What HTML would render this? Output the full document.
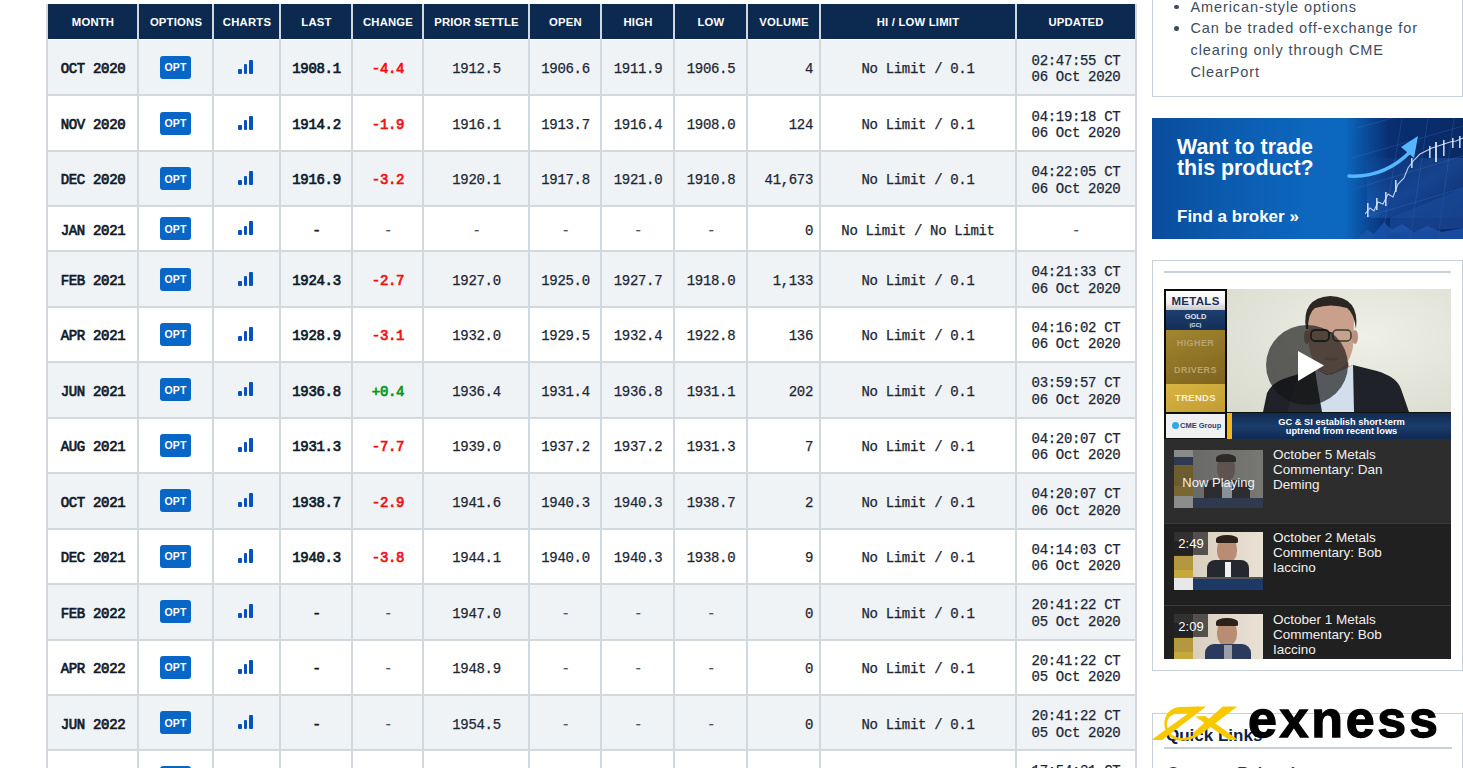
<!DOCTYPE html>
<html><head><meta charset="utf-8"><title>Gold Futures Quotes</title>
<style>
*{box-sizing:border-box;margin:0;padding:0}
html,body{width:1463px;height:768px;overflow:hidden;background:#fff}
body{position:relative;font-family:"Liberation Sans",sans-serif}
.ab{position:absolute}
.hd{position:absolute;top:4px;height:35px;background:#0c2a4f}
.ht{position:absolute;top:4px;height:35px;display:flex;align-items:center;justify-content:center;color:#fff;font:bold 11.3px "Liberation Sans",sans-serif;letter-spacing:0.2px;white-space:nowrap}
.rw{position:absolute;left:47px;width:1090px}
.c{position:absolute;display:flex;align-items:center;justify-content:center;padding-top:4px;font-family:"Liberation Mono",monospace;font-size:14px;line-height:16.5px;color:#1c2633;white-space:pre;text-align:center;letter-spacing:-0.33px;-webkit-text-stroke:0.25px #1c2633}
.b{color:#101a28;-webkit-text-stroke:0.7px #101a28}
.r{justify-content:flex-end;padding-right:7px}
.vl{position:absolute;width:2px;background:#d1d8de}
.hl{position:absolute;height:2px;background:#d1d8de}
.opt{position:absolute;width:31px;height:23px;background:#0866c6;border-radius:3px;color:#fff;font:bold 10.5px "Liberation Sans",sans-serif;display:flex;align-items:center;justify-content:center;letter-spacing:0.2px}
.bar{position:absolute;width:3.5px;background:#0752bd;border-radius:1px}
.neg{color:#f50d0d;-webkit-text-stroke:0.7px #f50d0d}
.sb{position:absolute;left:1190.5px;font:14.5px "Liberation Sans",sans-serif;line-height:21.7px;letter-spacing:0.9px;color:#3e4c5d;white-space:nowrap}
.bl{width:4.5px;height:4.5px;border-radius:50%;background:#3e4c5d}
.bt{color:#fff;font-family:"Liberation Sans",sans-serif;font-weight:bold;white-space:nowrap}
.th{width:89px;height:58px;overflow:hidden;background:#555}
.pt{color:#f0f0f0;font:13.5px "Liberation Sans",sans-serif;line-height:15px;white-space:nowrap}
.pos{color:#05991c;-webkit-text-stroke:0.7px #05991c}
.dash{color:#4a5562;-webkit-text-stroke:0.2px #4a5562}
</style></head><body>

<div class="hd" style="left:48px;width:90px"></div>
<div class="ht" style="left:48px;width:90px">MONTH</div>
<div class="hd" style="left:139px;width:74px"></div>
<div class="ht" style="left:139px;width:74px">OPTIONS</div>
<div class="hd" style="left:214px;width:66px"></div>
<div class="ht" style="left:214px;width:66px">CHARTS</div>
<div class="hd" style="left:281px;width:71px"></div>
<div class="ht" style="left:281px;width:71px">LAST</div>
<div class="hd" style="left:353px;width:70px"></div>
<div class="ht" style="left:353px;width:70px">CHANGE</div>
<div class="hd" style="left:424px;width:105px"></div>
<div class="ht" style="left:424px;width:105px">PRIOR SETTLE</div>
<div class="hd" style="left:530px;width:71px"></div>
<div class="ht" style="left:530px;width:71px">OPEN</div>
<div class="hd" style="left:602px;width:72px"></div>
<div class="ht" style="left:602px;width:72px">HIGH</div>
<div class="hd" style="left:675px;width:72px"></div>
<div class="ht" style="left:675px;width:72px">LOW</div>
<div class="hd" style="left:748px;width:72px"></div>
<div class="ht" style="left:748px;width:72px">VOLUME</div>
<div class="hd" style="left:821px;width:194px"></div>
<div class="ht" style="left:821px;width:194px">HI / LOW LIMIT</div>
<div class="hd" style="left:1016px;width:120px"></div>
<div class="ht" style="left:1016px;width:120px">UPDATED</div>
<div class="rw" style="top:39.5px;height:55.8px;background:#eff3f6"></div>
<div class="c b" style="left:48px;width:90px;top:39.5px;height:55.8px">OCT 2020</div>
<div class="opt" style="left:160px;top:55.9px">OPT</div>
<div class="bar" style="left:238px;top:68.9px;height:5px"></div>
<div class="bar" style="left:243.5px;top:64.4px;height:9.5px"></div>
<div class="bar" style="left:249px;top:59.9px;height:14px"></div>
<div class="c b" style="left:281px;width:71px;top:39.5px;height:55.8px">1908.1</div>
<div class="c b neg" style="left:353px;width:70px;top:39.5px;height:55.8px">-4.4</div>
<div class="c " style="left:424px;width:105px;top:39.5px;height:55.8px">1912.5</div>
<div class="c " style="left:530px;width:71px;top:39.5px;height:55.8px">1906.6</div>
<div class="c " style="left:602px;width:72px;top:39.5px;height:55.8px">1911.9</div>
<div class="c " style="left:675px;width:72px;top:39.5px;height:55.8px">1906.5</div>
<div class="c r" style="left:748px;width:72px;top:39.5px;height:55.8px">4</div>
<div class="c " style="left:821px;width:194px;top:39.5px;height:55.8px">No Limit / 0.1</div>
<div class="c " style="left:1016px;width:120px;top:39.5px;height:55.8px">02:47:55 CT<br>06 Oct 2020</div>
<div class="rw" style="top:95.3px;height:55.500000000000014px;background:#ffffff"></div>
<div class="c b" style="left:48px;width:90px;top:95.3px;height:55.500000000000014px">NOV 2020</div>
<div class="opt" style="left:160px;top:111.6px">OPT</div>
<div class="bar" style="left:238px;top:124.6px;height:5px"></div>
<div class="bar" style="left:243.5px;top:120.1px;height:9.5px"></div>
<div class="bar" style="left:249px;top:115.6px;height:14px"></div>
<div class="c b" style="left:281px;width:71px;top:95.3px;height:55.500000000000014px">1914.2</div>
<div class="c b neg" style="left:353px;width:70px;top:95.3px;height:55.500000000000014px">-1.9</div>
<div class="c " style="left:424px;width:105px;top:95.3px;height:55.500000000000014px">1916.1</div>
<div class="c " style="left:530px;width:71px;top:95.3px;height:55.500000000000014px">1913.7</div>
<div class="c " style="left:602px;width:72px;top:95.3px;height:55.500000000000014px">1916.4</div>
<div class="c " style="left:675px;width:72px;top:95.3px;height:55.500000000000014px">1908.0</div>
<div class="c r" style="left:748px;width:72px;top:95.3px;height:55.500000000000014px">124</div>
<div class="c " style="left:821px;width:194px;top:95.3px;height:55.500000000000014px">No Limit / 0.1</div>
<div class="c " style="left:1016px;width:120px;top:95.3px;height:55.500000000000014px">04:19:18 CT<br>06 Oct 2020</div>
<div class="rw" style="top:150.8px;height:55.5px;background:#eff3f6"></div>
<div class="c b" style="left:48px;width:90px;top:150.8px;height:55.5px">DEC 2020</div>
<div class="opt" style="left:160px;top:167.1px">OPT</div>
<div class="bar" style="left:238px;top:180.1px;height:5px"></div>
<div class="bar" style="left:243.5px;top:175.6px;height:9.5px"></div>
<div class="bar" style="left:249px;top:171.1px;height:14px"></div>
<div class="c b" style="left:281px;width:71px;top:150.8px;height:55.5px">1916.9</div>
<div class="c b neg" style="left:353px;width:70px;top:150.8px;height:55.5px">-3.2</div>
<div class="c " style="left:424px;width:105px;top:150.8px;height:55.5px">1920.1</div>
<div class="c " style="left:530px;width:71px;top:150.8px;height:55.5px">1917.8</div>
<div class="c " style="left:602px;width:72px;top:150.8px;height:55.5px">1921.0</div>
<div class="c " style="left:675px;width:72px;top:150.8px;height:55.5px">1910.8</div>
<div class="c r" style="left:748px;width:72px;top:150.8px;height:55.5px">41,673</div>
<div class="c " style="left:821px;width:194px;top:150.8px;height:55.5px">No Limit / 0.1</div>
<div class="c " style="left:1016px;width:120px;top:150.8px;height:55.5px">04:22:05 CT<br>06 Oct 2020</div>
<div class="rw" style="top:206.3px;height:45.0px;background:#ffffff"></div>
<div class="c b" style="left:48px;width:90px;top:206.3px;height:45.0px">JAN 2021</div>
<div class="opt" style="left:160px;top:217.3px">OPT</div>
<div class="bar" style="left:238px;top:230.3px;height:5px"></div>
<div class="bar" style="left:243.5px;top:225.8px;height:9.5px"></div>
<div class="bar" style="left:249px;top:221.3px;height:14px"></div>
<div class="c b" style="left:281px;width:71px;top:206.3px;height:45.0px">-</div>
<div class="c dash" style="left:353px;width:70px;top:206.3px;height:45.0px">-</div>
<div class="c dash" style="left:424px;width:105px;top:206.3px;height:45.0px">-</div>
<div class="c dash" style="left:530px;width:71px;top:206.3px;height:45.0px">-</div>
<div class="c dash" style="left:602px;width:72px;top:206.3px;height:45.0px">-</div>
<div class="c dash" style="left:675px;width:72px;top:206.3px;height:45.0px">-</div>
<div class="c r" style="left:748px;width:72px;top:206.3px;height:45.0px">0</div>
<div class="c " style="left:821px;width:194px;top:206.3px;height:45.0px">No Limit / No Limit</div>
<div class="c dash" style="left:1016px;width:120px;top:206.3px;height:45.0px">-</div>
<div class="rw" style="top:251.3px;height:55.30000000000001px;background:#eff3f6"></div>
<div class="c b" style="left:48px;width:90px;top:251.3px;height:55.30000000000001px">FEB 2021</div>
<div class="opt" style="left:160px;top:267.5px">OPT</div>
<div class="bar" style="left:238px;top:280.5px;height:5px"></div>
<div class="bar" style="left:243.5px;top:276.0px;height:9.5px"></div>
<div class="bar" style="left:249px;top:271.5px;height:14px"></div>
<div class="c b" style="left:281px;width:71px;top:251.3px;height:55.30000000000001px">1924.3</div>
<div class="c b neg" style="left:353px;width:70px;top:251.3px;height:55.30000000000001px">-2.7</div>
<div class="c " style="left:424px;width:105px;top:251.3px;height:55.30000000000001px">1927.0</div>
<div class="c " style="left:530px;width:71px;top:251.3px;height:55.30000000000001px">1925.0</div>
<div class="c " style="left:602px;width:72px;top:251.3px;height:55.30000000000001px">1927.7</div>
<div class="c " style="left:675px;width:72px;top:251.3px;height:55.30000000000001px">1918.0</div>
<div class="c r" style="left:748px;width:72px;top:251.3px;height:55.30000000000001px">1,133</div>
<div class="c " style="left:821px;width:194px;top:251.3px;height:55.30000000000001px">No Limit / 0.1</div>
<div class="c " style="left:1016px;width:120px;top:251.3px;height:55.30000000000001px">04:21:33 CT<br>06 Oct 2020</div>
<div class="rw" style="top:306.6px;height:55.599999999999966px;background:#ffffff"></div>
<div class="c b" style="left:48px;width:90px;top:306.6px;height:55.599999999999966px">APR 2021</div>
<div class="opt" style="left:160px;top:322.9px">OPT</div>
<div class="bar" style="left:238px;top:335.9px;height:5px"></div>
<div class="bar" style="left:243.5px;top:331.4px;height:9.5px"></div>
<div class="bar" style="left:249px;top:326.9px;height:14px"></div>
<div class="c b" style="left:281px;width:71px;top:306.6px;height:55.599999999999966px">1928.9</div>
<div class="c b neg" style="left:353px;width:70px;top:306.6px;height:55.599999999999966px">-3.1</div>
<div class="c " style="left:424px;width:105px;top:306.6px;height:55.599999999999966px">1932.0</div>
<div class="c " style="left:530px;width:71px;top:306.6px;height:55.599999999999966px">1929.5</div>
<div class="c " style="left:602px;width:72px;top:306.6px;height:55.599999999999966px">1932.4</div>
<div class="c " style="left:675px;width:72px;top:306.6px;height:55.599999999999966px">1922.8</div>
<div class="c r" style="left:748px;width:72px;top:306.6px;height:55.599999999999966px">136</div>
<div class="c " style="left:821px;width:194px;top:306.6px;height:55.599999999999966px">No Limit / 0.1</div>
<div class="c " style="left:1016px;width:120px;top:306.6px;height:55.599999999999966px">04:16:02 CT<br>06 Oct 2020</div>
<div class="rw" style="top:362.2px;height:55.5px;background:#eff3f6"></div>
<div class="c b" style="left:48px;width:90px;top:362.2px;height:55.5px">JUN 2021</div>
<div class="opt" style="left:160px;top:378.4px">OPT</div>
<div class="bar" style="left:238px;top:391.4px;height:5px"></div>
<div class="bar" style="left:243.5px;top:386.9px;height:9.5px"></div>
<div class="bar" style="left:249px;top:382.4px;height:14px"></div>
<div class="c b" style="left:281px;width:71px;top:362.2px;height:55.5px">1936.8</div>
<div class="c b pos" style="left:353px;width:70px;top:362.2px;height:55.5px">+0.4</div>
<div class="c " style="left:424px;width:105px;top:362.2px;height:55.5px">1936.4</div>
<div class="c " style="left:530px;width:71px;top:362.2px;height:55.5px">1931.4</div>
<div class="c " style="left:602px;width:72px;top:362.2px;height:55.5px">1936.8</div>
<div class="c " style="left:675px;width:72px;top:362.2px;height:55.5px">1931.1</div>
<div class="c r" style="left:748px;width:72px;top:362.2px;height:55.5px">202</div>
<div class="c " style="left:821px;width:194px;top:362.2px;height:55.5px">No Limit / 0.1</div>
<div class="c " style="left:1016px;width:120px;top:362.2px;height:55.5px">03:59:57 CT<br>06 Oct 2020</div>
<div class="rw" style="top:417.7px;height:55.400000000000034px;background:#ffffff"></div>
<div class="c b" style="left:48px;width:90px;top:417.7px;height:55.400000000000034px">AUG 2021</div>
<div class="opt" style="left:160px;top:433.9px">OPT</div>
<div class="bar" style="left:238px;top:446.9px;height:5px"></div>
<div class="bar" style="left:243.5px;top:442.4px;height:9.5px"></div>
<div class="bar" style="left:249px;top:437.9px;height:14px"></div>
<div class="c b" style="left:281px;width:71px;top:417.7px;height:55.400000000000034px">1931.3</div>
<div class="c b neg" style="left:353px;width:70px;top:417.7px;height:55.400000000000034px">-7.7</div>
<div class="c " style="left:424px;width:105px;top:417.7px;height:55.400000000000034px">1939.0</div>
<div class="c " style="left:530px;width:71px;top:417.7px;height:55.400000000000034px">1937.2</div>
<div class="c " style="left:602px;width:72px;top:417.7px;height:55.400000000000034px">1937.2</div>
<div class="c " style="left:675px;width:72px;top:417.7px;height:55.400000000000034px">1931.3</div>
<div class="c r" style="left:748px;width:72px;top:417.7px;height:55.400000000000034px">7</div>
<div class="c " style="left:821px;width:194px;top:417.7px;height:55.400000000000034px">No Limit / 0.1</div>
<div class="c " style="left:1016px;width:120px;top:417.7px;height:55.400000000000034px">04:20:07 CT<br>06 Oct 2020</div>
<div class="rw" style="top:473.1px;height:55.5px;background:#eff3f6"></div>
<div class="c b" style="left:48px;width:90px;top:473.1px;height:55.5px">OCT 2021</div>
<div class="opt" style="left:160px;top:489.4px">OPT</div>
<div class="bar" style="left:238px;top:502.4px;height:5px"></div>
<div class="bar" style="left:243.5px;top:497.9px;height:9.5px"></div>
<div class="bar" style="left:249px;top:493.4px;height:14px"></div>
<div class="c b" style="left:281px;width:71px;top:473.1px;height:55.5px">1938.7</div>
<div class="c b neg" style="left:353px;width:70px;top:473.1px;height:55.5px">-2.9</div>
<div class="c " style="left:424px;width:105px;top:473.1px;height:55.5px">1941.6</div>
<div class="c " style="left:530px;width:71px;top:473.1px;height:55.5px">1940.3</div>
<div class="c " style="left:602px;width:72px;top:473.1px;height:55.5px">1940.3</div>
<div class="c " style="left:675px;width:72px;top:473.1px;height:55.5px">1938.7</div>
<div class="c r" style="left:748px;width:72px;top:473.1px;height:55.5px">2</div>
<div class="c " style="left:821px;width:194px;top:473.1px;height:55.5px">No Limit / 0.1</div>
<div class="c " style="left:1016px;width:120px;top:473.1px;height:55.5px">04:20:07 CT<br>06 Oct 2020</div>
<div class="rw" style="top:528.6px;height:55.5px;background:#ffffff"></div>
<div class="c b" style="left:48px;width:90px;top:528.6px;height:55.5px">DEC 2021</div>
<div class="opt" style="left:160px;top:544.9px">OPT</div>
<div class="bar" style="left:238px;top:557.9px;height:5px"></div>
<div class="bar" style="left:243.5px;top:553.4px;height:9.5px"></div>
<div class="bar" style="left:249px;top:548.9px;height:14px"></div>
<div class="c b" style="left:281px;width:71px;top:528.6px;height:55.5px">1940.3</div>
<div class="c b neg" style="left:353px;width:70px;top:528.6px;height:55.5px">-3.8</div>
<div class="c " style="left:424px;width:105px;top:528.6px;height:55.5px">1944.1</div>
<div class="c " style="left:530px;width:71px;top:528.6px;height:55.5px">1940.0</div>
<div class="c " style="left:602px;width:72px;top:528.6px;height:55.5px">1940.3</div>
<div class="c " style="left:675px;width:72px;top:528.6px;height:55.5px">1938.0</div>
<div class="c r" style="left:748px;width:72px;top:528.6px;height:55.5px">9</div>
<div class="c " style="left:821px;width:194px;top:528.6px;height:55.5px">No Limit / 0.1</div>
<div class="c " style="left:1016px;width:120px;top:528.6px;height:55.5px">04:14:03 CT<br>06 Oct 2020</div>
<div class="rw" style="top:584.1px;height:55.39999999999998px;background:#eff3f6"></div>
<div class="c b" style="left:48px;width:90px;top:584.1px;height:55.39999999999998px">FEB 2022</div>
<div class="opt" style="left:160px;top:600.3px">OPT</div>
<div class="bar" style="left:238px;top:613.3px;height:5px"></div>
<div class="bar" style="left:243.5px;top:608.8px;height:9.5px"></div>
<div class="bar" style="left:249px;top:604.3px;height:14px"></div>
<div class="c b" style="left:281px;width:71px;top:584.1px;height:55.39999999999998px">-</div>
<div class="c dash" style="left:353px;width:70px;top:584.1px;height:55.39999999999998px">-</div>
<div class="c " style="left:424px;width:105px;top:584.1px;height:55.39999999999998px">1947.0</div>
<div class="c dash" style="left:530px;width:71px;top:584.1px;height:55.39999999999998px">-</div>
<div class="c dash" style="left:602px;width:72px;top:584.1px;height:55.39999999999998px">-</div>
<div class="c dash" style="left:675px;width:72px;top:584.1px;height:55.39999999999998px">-</div>
<div class="c r" style="left:748px;width:72px;top:584.1px;height:55.39999999999998px">0</div>
<div class="c " style="left:821px;width:194px;top:584.1px;height:55.39999999999998px">No Limit / 0.1</div>
<div class="c " style="left:1016px;width:120px;top:584.1px;height:55.39999999999998px">20:41:22 CT<br>05 Oct 2020</div>
<div class="rw" style="top:639.5px;height:55.5px;background:#ffffff"></div>
<div class="c b" style="left:48px;width:90px;top:639.5px;height:55.5px">APR 2022</div>
<div class="opt" style="left:160px;top:655.8px">OPT</div>
<div class="bar" style="left:238px;top:668.8px;height:5px"></div>
<div class="bar" style="left:243.5px;top:664.2px;height:9.5px"></div>
<div class="bar" style="left:249px;top:659.8px;height:14px"></div>
<div class="c b" style="left:281px;width:71px;top:639.5px;height:55.5px">-</div>
<div class="c dash" style="left:353px;width:70px;top:639.5px;height:55.5px">-</div>
<div class="c " style="left:424px;width:105px;top:639.5px;height:55.5px">1948.9</div>
<div class="c dash" style="left:530px;width:71px;top:639.5px;height:55.5px">-</div>
<div class="c dash" style="left:602px;width:72px;top:639.5px;height:55.5px">-</div>
<div class="c dash" style="left:675px;width:72px;top:639.5px;height:55.5px">-</div>
<div class="c r" style="left:748px;width:72px;top:639.5px;height:55.5px">0</div>
<div class="c " style="left:821px;width:194px;top:639.5px;height:55.5px">No Limit / 0.1</div>
<div class="c " style="left:1016px;width:120px;top:639.5px;height:55.5px">20:41:22 CT<br>05 Oct 2020</div>
<div class="rw" style="top:695px;height:55.5px;background:#eff3f6"></div>
<div class="c b" style="left:48px;width:90px;top:695px;height:55.5px">JUN 2022</div>
<div class="opt" style="left:160px;top:711.2px">OPT</div>
<div class="bar" style="left:238px;top:724.2px;height:5px"></div>
<div class="bar" style="left:243.5px;top:719.8px;height:9.5px"></div>
<div class="bar" style="left:249px;top:715.2px;height:14px"></div>
<div class="c b" style="left:281px;width:71px;top:695px;height:55.5px">-</div>
<div class="c dash" style="left:353px;width:70px;top:695px;height:55.5px">-</div>
<div class="c " style="left:424px;width:105px;top:695px;height:55.5px">1954.5</div>
<div class="c dash" style="left:530px;width:71px;top:695px;height:55.5px">-</div>
<div class="c dash" style="left:602px;width:72px;top:695px;height:55.5px">-</div>
<div class="c dash" style="left:675px;width:72px;top:695px;height:55.5px">-</div>
<div class="c r" style="left:748px;width:72px;top:695px;height:55.5px">0</div>
<div class="c " style="left:821px;width:194px;top:695px;height:55.5px">No Limit / 0.1</div>
<div class="c " style="left:1016px;width:120px;top:695px;height:55.5px">20:41:22 CT<br>05 Oct 2020</div>
<div class="rw" style="top:750.5px;height:54.5px;background:#ffffff"></div>
<div class="c b" style="left:48px;width:90px;top:750.5px;height:54.5px">AUG 2022</div>
<div class="opt" style="left:160px;top:766.2px">OPT</div>
<div class="bar" style="left:238px;top:779.2px;height:5px"></div>
<div class="bar" style="left:243.5px;top:774.8px;height:9.5px"></div>
<div class="bar" style="left:249px;top:770.2px;height:14px"></div>
<div class="c b" style="left:281px;width:71px;top:750.5px;height:54.5px">-</div>
<div class="c dash" style="left:353px;width:70px;top:750.5px;height:54.5px">-</div>
<div class="c " style="left:424px;width:105px;top:750.5px;height:54.5px">1960.0</div>
<div class="c dash" style="left:530px;width:71px;top:750.5px;height:54.5px">-</div>
<div class="c dash" style="left:602px;width:72px;top:750.5px;height:54.5px">-</div>
<div class="c dash" style="left:675px;width:72px;top:750.5px;height:54.5px">-</div>
<div class="c r" style="left:748px;width:72px;top:750.5px;height:54.5px">0</div>
<div class="c " style="left:821px;width:194px;top:750.5px;height:54.5px">No Limit / 0.1</div>
<div class="c " style="left:1016px;width:120px;top:750.5px;height:54.5px">17:54:21 CT<br>05 Oct 2020</div>
<div class="vl" style="left:46px;top:4px;height:764px"></div>
<div class="vl" style="left:137px;top:4px;height:764px"></div>
<div class="vl" style="left:212px;top:4px;height:764px"></div>
<div class="vl" style="left:279px;top:4px;height:764px"></div>
<div class="vl" style="left:351px;top:4px;height:764px"></div>
<div class="vl" style="left:422px;top:4px;height:764px"></div>
<div class="vl" style="left:528px;top:4px;height:764px"></div>
<div class="vl" style="left:600px;top:4px;height:764px"></div>
<div class="vl" style="left:673px;top:4px;height:764px"></div>
<div class="vl" style="left:746px;top:4px;height:764px"></div>
<div class="vl" style="left:819px;top:4px;height:764px"></div>
<div class="vl" style="left:1014.5px;top:4px;height:764px"></div>
<div class="vl" style="left:1135px;top:4px;height:764px"></div>
<div class="hl" style="left:46px;width:1091px;top:94px"></div>
<div class="hl" style="left:46px;width:1091px;top:150px"></div>
<div class="hl" style="left:46px;width:1091px;top:205px"></div>
<div class="hl" style="left:46px;width:1091px;top:250px"></div>
<div class="hl" style="left:46px;width:1091px;top:306px"></div>
<div class="hl" style="left:46px;width:1091px;top:361px"></div>
<div class="hl" style="left:46px;width:1091px;top:417px"></div>
<div class="hl" style="left:46px;width:1091px;top:472px"></div>
<div class="hl" style="left:46px;width:1091px;top:528px"></div>
<div class="hl" style="left:46px;width:1091px;top:583px"></div>
<div class="hl" style="left:46px;width:1091px;top:639px"></div>
<div class="hl" style="left:46px;width:1091px;top:694px"></div>
<div class="hl" style="left:46px;width:1091px;top:749px"></div>
<div class="hl" style="left:46px;width:1091px;top:804px"></div>
<!-- box 1 -->
<div class="ab" style="left:1152px;top:-120px;width:311px;height:217px;border:1px solid #c8d0d8;background:#fff"></div>
<div class="ab bl" style="left:1174px;top:4.5px"></div>
<div class="ab bl" style="left:1174px;top:26px"></div>
<div class="ab sb" style="top:-3.3px">American-style options</div>
<div class="ab sb" style="top:18.2px">Can be traded off-exchange for</div>
<div class="ab sb" style="top:39.8px">clearing only through CME</div>
<div class="ab sb" style="top:61.6px">ClearPort</div>

<!-- banner -->
<div class="ab" style="left:1152px;top:118px;width:311px;height:121px;overflow:hidden;background:linear-gradient(90deg,#0a4c9c 0%,#0b5aae 22%,#0c67bd 50%,#0c68be 62%,#0a4f9f 68%,#082f72 76%,#0a2a66 100%)">
  <svg width="311" height="121" style="position:absolute;left:0;top:0">
    <defs>
      <linearGradient id="hl" x1="0" x2="1" y1="0" y2="1">
        <stop offset="0" stop-color="#3a7ad6" stop-opacity="0.0"/>
        <stop offset="0.5" stop-color="#2f6fd0" stop-opacity="0.35"/>
        <stop offset="1" stop-color="#1a4fa8" stop-opacity="0.2"/>
      </linearGradient>
    </defs>
    <rect x="215" y="40" width="96" height="60" fill="url(#hl)"/>
    <g stroke="#4f8be0" stroke-width="0.7" opacity="0.3" fill="none">
      <path d="M205 10 L311 -20"/><path d="M200 40 L311 8"/><path d="M205 70 L311 38"/><path d="M210 100 L311 70"/>
      <path d="M230 121 L250 0"/><path d="M258 121 L276 0"/><path d="M286 121 L302 0"/>
    </g>
    <g fill="#1d4c9c" opacity="0.6">
      <path d="M238 100 L311 70 L311 110 L238 115 Z"/>
    </g>
    <g stroke="#cfe2ff" stroke-width="1.1" fill="none" opacity="0.9">
      <path d="M213 96 L218 90 L222 93 L226 84 L231 86 L236 76 L241 79 L246 66 L252 60 L256 50 L262 42 L268 36 L274 33 L280 30 L286 28 L292 26 L298 24 L304 23 L311 20"/>
    </g>
    <g fill="#e6f0ff" opacity="0.85">
      <rect x="215" y="85" width="1.6" height="14"/><rect x="224" y="80" width="1.6" height="12"/><rect x="233" y="74" width="1.6" height="14"/>
      <rect x="243" y="62" width="1.6" height="12"/><rect x="259" y="40" width="1.6" height="10"/><rect x="277" y="28" width="1.6" height="12"/>
      <rect x="283" y="24" width="2" height="20"/><rect x="291" y="22" width="1.6" height="16"/><rect x="300" y="20" width="1.6" height="10"/><rect x="307" y="18" width="1.6" height="12"/>
    </g>
    <path d="M197 58 Q232 60 258 34" stroke="#55b8ff" stroke-width="3.5" fill="none" stroke-linecap="round"/>
    <path d="M249 29 L266 18 L262 40 Z" fill="#55b8ff"/>
    <g fill="#1e56b0" opacity="0.75"><path d="M205 121 L215 112 L222 116 L232 104 L240 112 L250 106 L262 114 L275 108 L290 114 L311 110 L311 121 Z"/></g>
  </svg>
  <div class="ab bt" style="left:25px;top:18.5px;font-size:21.4px;line-height:21px">Want to trade<br>this product?</div>
  <div class="ab bt" style="left:25px;top:89px;font-size:17px;line-height:20px">Find a broker »</div>
</div>

<!-- box 2 video -->
<div class="ab" style="left:1152px;top:260px;width:311px;height:411px;border:1px solid #c8d0d8;background:#fff"></div>
<div class="ab" style="left:1164px;top:271px;width:287px;height:2px;background:#c8d0d8"></div>
<div class="ab" style="left:1164px;top:289px;width:287px;height:150px;background:#111;overflow:hidden">
  <!-- photo -->
  <div class="ab" style="left:63px;top:0;width:224px;height:123px;background:radial-gradient(ellipse at 62% 38%,#eef0e6 0%,#e4e5da 50%,#d8dacd 100%)"></div>
  <svg class="ab" style="left:63px;top:0" width="224" height="123">
    <!-- suit -->
    <path d="M36 123 L40 104 Q46 92 62 88 L88 80 L102 86 L126 76 L150 82 Q170 88 174 100 L182 123 Z" fill="#1f2229"/>
    <!-- shirt -->
    <path d="M88 80 L100 86 L112 82 L126 76 L127 123 L91 123 Z" fill="#d3deec"/>
    <path d="M70 90 L88 82 L95 123 L60 123 Z" fill="#262930"/>
    <!-- neck -->
    <path d="M90 66 L120 66 L122 78 L104 86 L90 80 Z" fill="#a9826f"/>
    <!-- face -->
    <path d="M81 30 Q81 16 104 15 Q127 16 127 32 L126 58 Q122 80 104 84 Q86 80 82 58 Z" fill="#c8a08c"/>
    <ellipse cx="80" cy="48" rx="3" ry="7" fill="#b88f7c"/>
    <ellipse cx="128" cy="48" rx="3" ry="7" fill="#b88f7c"/>
    <!-- hair -->
    <path d="M79 40 Q74 9 103 7 Q133 8 129 40 Q127 24 120 19 Q104 14 88 19 Q81 24 81 40 Z" fill="#2c2622"/>
    <!-- glasses -->
    <rect x="84" y="41" width="18" height="11" rx="4" fill="none" stroke="#2a2a2a" stroke-width="1.8"/>
    <rect x="106" y="41" width="18" height="11" rx="4" fill="none" stroke="#3a3a3a" stroke-width="1.5"/>
    <path d="M102 44 L106 44" stroke="#333" stroke-width="1.3"/>
    <ellipse cx="104" cy="70" rx="7" ry="1.5" fill="#9e6f66" opacity="0.6"/>
  </svg>
  <!-- play -->
  <div class="ab" style="left:102px;top:36px;width:82px;height:80px;border-radius:50%;background:rgba(20,20,20,0.66)"></div>
  <svg class="ab" style="left:133px;top:61px" width="28" height="32"><path d="M1 1 L27 15.5 L1 31 Z" fill="#fff"/></svg>
  <!-- metals panel -->
  <div class="ab" style="left:0;top:0;width:63px;height:124px;background:#0b0b0b"></div>
  <div class="ab" style="left:2px;top:2px;width:59px;height:19px;background:linear-gradient(#ffffff,#f0f0f0 60%,#c9c9c9);color:#1c2e55;font:bold 11.5px 'Liberation Sans',sans-serif;text-align:center;line-height:20px;letter-spacing:0.3px">METALS</div>
  <div class="ab" style="left:2px;top:21px;width:59px;height:20px;background:linear-gradient(#1d3f6e,#142f57);color:#dfe6ef;font:bold 7.5px 'Liberation Sans',sans-serif;text-align:center;line-height:8px;padding-top:3px">GOLD<br><span style="font-size:5.5px">(GC)</span></div>
  <div class="ab" style="left:2px;top:41px;width:59px;height:54px;background:linear-gradient(160deg,#a38630,#8c7025 60%,#7d6420);color:#b8a46c;font:bold 9px 'Liberation Sans',sans-serif;text-align:center;line-height:27px;letter-spacing:0.4px">HIGHER<br>DRIVERS</div>
  <div class="ab" style="left:2px;top:95px;width:59px;height:28px;background:linear-gradient(160deg,#d8b443,#c29e33);color:#f6efd8;font:bold 9.5px 'Liberation Sans',sans-serif;text-align:center;line-height:28px;letter-spacing:0.3px">TRENDS</div>
  <!-- ticker -->
  <div class="ab" style="left:2px;top:125px;width:59px;height:24px;background:#eef0f2;color:#2c3f70;font:bold 7.5px 'Liberation Sans',sans-serif;line-height:24px;padding-left:6px;white-space:nowrap"><span style="display:inline-block;width:7px;height:7px;border-radius:50%;background:#2ea9e6;vertical-align:-1px;margin-right:1px"></span>CME Group</div>
  <div class="ab" style="left:63px;top:124px;width:224px;height:26px;background:linear-gradient(#102a4e,#1b3d6c 50%,#0f2a52)"></div>
  <div class="ab" style="left:63px;top:124px;width:5px;height:26px;background:#f2b81d"></div>
  <div class="ab" style="left:68px;top:128.5px;width:219px;height:22px;color:#fff;font:bold 9.3px 'Liberation Sans',sans-serif;line-height:9.5px;text-align:center">GC &amp; SI establish short-term<br>uptrend from recent lows</div>
</div>
<!-- playlist -->
<div class="ab" style="left:1164px;top:439px;width:287px;height:220px;background:#202020;overflow:hidden">
  <div class="ab" style="left:0;top:0;width:287px;height:84px;background:#2d2d2d"></div>
  <div class="ab" style="left:0;top:84px;width:287px;height:1px;background:#3a3a3a"></div>
  <div class="ab" style="left:0;top:166px;width:287px;height:1px;background:#3a3a3a"></div>
  <!-- thumb1 -->
  <div class="ab th" style="left:10px;top:10.5px;background:#606060">
    <div class="ab" style="left:0;top:0;width:19px;height:58px;background:linear-gradient(#8a8a8a 0 12%,#2e3a52 12% 26%,#6d5c2e 26% 62%,#7a6630 62% 80%,#8c8c8c 80%)"></div>
    <div class="ab" style="left:19px;top:0;width:70px;height:48px;background:linear-gradient(90deg,#6a6a68,#777774)"></div>
    <div class="ab" style="left:43px;top:6px;width:18px;height:25px;border-radius:45%;background:#5e5350"></div>
    <div class="ab" style="left:42px;top:4px;width:20px;height:8px;border-radius:50% 50% 10% 10%;background:#2e2a28"></div>
    <div class="ab" style="left:30px;top:30px;width:46px;height:18px;border-radius:8px 8px 0 0;background:#2c2d31"></div>
    <div class="ab" style="left:48px;top:32px;width:10px;height:16px;background:#8a9098"></div>
    <div class="ab" style="left:19px;top:48px;width:70px;height:10px;background:#2e3a4e"></div>
    <div class="ab" style="left:0;top:25px;width:89px;color:#f2f2f2;font:13px 'Liberation Sans',sans-serif;text-align:center;white-space:nowrap">Now Playing</div>
  </div>
  <div class="ab pt" style="left:109px;top:8px">October 5 Metals<br>Commentary: Dan<br>Deming</div>
  <!-- thumb2 -->
  <div class="ab th" style="left:10px;top:92.5px">
    <div class="ab" style="left:0;top:0;width:19px;height:58px;background:linear-gradient(#606060 0 15%,#2c2c2c 15% 42%,#b39840 42% 65%,#c7a83d 65% 80%,#e8e8e8 80%)"></div>
    <div class="ab" style="left:19px;top:0;width:70px;height:45px;background:linear-gradient(90deg,#d9cfc0,#e9e1d4)"></div>
    <div class="ab" style="left:43px;top:5px;width:20px;height:26px;border-radius:45%;background:#b98d74"></div>
    <div class="ab" style="left:42px;top:3px;width:22px;height:8px;border-radius:50% 50% 10% 10%;background:#2b221c"></div>
    <div class="ab" style="left:33px;top:28px;width:42px;height:17px;border-radius:8px 8px 0 0;background:#262830"></div>
    <div class="ab" style="left:51px;top:30px;width:6px;height:15px;background:#f0f0f0"></div>
    <div class="ab" style="left:19px;top:47px;width:70px;height:11px;background:#1d3a66"></div>
    <div class="ab" style="left:0;top:0;width:34px;height:23px;background:rgba(30,30,30,0.72)"></div>
    <div class="ab" style="left:0;top:4.5px;width:34px;color:#fff;font:13px 'Liberation Sans',sans-serif;text-align:center">2:49</div>
  </div>
  <div class="ab pt" style="left:109px;top:90.5px">October 2 Metals<br>Commentary: Bob<br>Iaccino</div>
  <!-- thumb3 -->
  <div class="ab th" style="left:10px;top:175px">
    <div class="ab" style="left:0;top:0;width:19px;height:58px;background:linear-gradient(#606060 0 15%,#2c2c2c 15% 42%,#b39840 42% 65%,#c7a83d 65% 80%,#e8e8e8 80%)"></div>
    <div class="ab" style="left:19px;top:0;width:70px;height:45px;background:linear-gradient(90deg,#d9cfc0,#e9e1d4)"></div>
    <div class="ab" style="left:43px;top:6px;width:20px;height:26px;border-radius:45%;background:#b98d74"></div>
    <div class="ab" style="left:42px;top:4px;width:22px;height:8px;border-radius:50% 50% 10% 10%;background:#2b221c"></div>
    <div class="ab" style="left:31px;top:30px;width:46px;height:28px;border-radius:9px 9px 0 0;background:#2c3a5e"></div>
    <div class="ab" style="left:50px;top:31px;width:8px;height:27px;background:#9aa0a8"></div>
    <div class="ab" style="left:0;top:0;width:34px;height:23px;background:rgba(30,30,30,0.72)"></div>
    <div class="ab" style="left:0;top:4.5px;width:34px;color:#fff;font:13px 'Liberation Sans',sans-serif;text-align:center">2:09</div>
  </div>
  <div class="ab pt" style="left:109px;top:173px">October 1 Metals<br>Commentary: Bob<br>Iaccino</div>
</div>

<!-- box 3 quick links -->
<div class="ab" style="left:1152px;top:713px;width:311px;height:100px;border:1px solid #c8d0d8;background:#fff"></div>
<div class="ab" style="left:1166px;top:726px;color:#0c2148;font:bold 17px 'Liberation Sans',sans-serif;white-space:nowrap">Quick Links</div>
<div class="ab" style="left:1164px;top:747px;width:288px;height:2px;background:#c8d0d8"></div>
<div class="ab" style="left:1167px;top:765px;color:#0b3c7a;font:bold 16px 'Liberation Sans',sans-serif;white-space:nowrap">Contract Related</div>

<!-- exness watermark -->
<svg class="ab" style="left:1148px;top:702px" width="100" height="44">
  <g fill="#f8c800">
    <path d="M3.3 38.1 L14.1 38.1 L58.1 4.6 L49.8 4.6 Z"/>
    <path d="M50.5 4.6 L31.5 4.9 C22 5.5 16.2 13 16.3 22 C16.5 31 23.5 38.6 32 38.5 C40 38.4 45.5 36.8 50.5 33.5 L48.8 31.2 C44 34.2 38.5 36 32.5 35.9 C24.5 35.6 18.9 29 19 22 C19.1 16 23 12 30 11.5 L41.5 11.2 Z"/>
    <path d="M74.8 4.6 L89.2 4.6 L54 31.5 L47 34.5 L44.5 31.5 Z"/>
    <path d="M47.2 14.4 L57.1 14.1 L89.9 37.8 L81.4 38.1 Z"/>
  </g>
</svg>
<div class="ab" style="left:1248px;top:687px;color:#000;font:bold 52px 'Liberation Sans',sans-serif;letter-spacing:2.7px;-webkit-text-stroke:1.3px #000;white-space:nowrap;line-height:64px">exness</div>

</body></html>
